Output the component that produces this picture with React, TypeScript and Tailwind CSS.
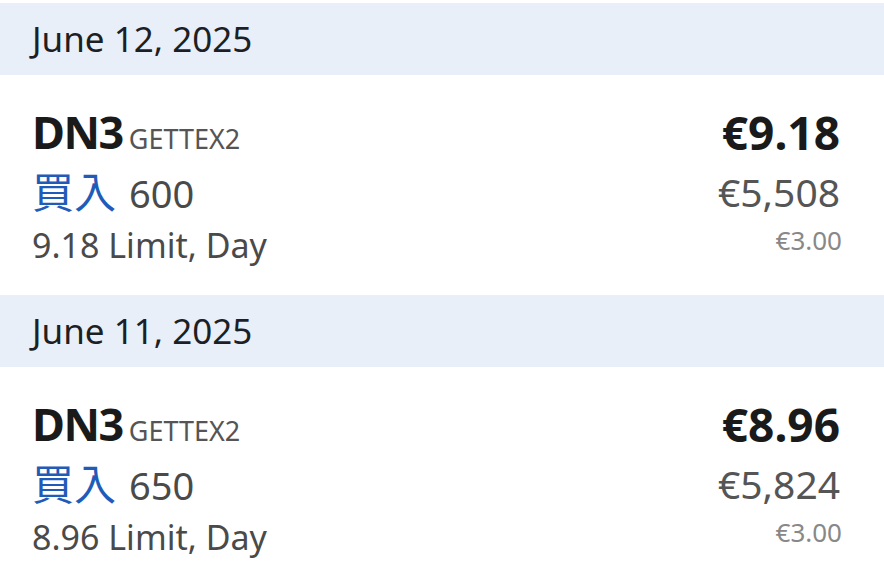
const orders = [
  { date: 'June 12, 2025', symbol: 'DN3', venue: 'GETTEX2', qty: 600, price: '€9.18', total: '€5,508', fee: '€3.00', limit: '9.18 Limit, Day' },
  { date: 'June 11, 2025', symbol: 'DN3', venue: 'GETTEX2', qty: 650, price: '€8.96', total: '€5,824', fee: '€3.00', limit: '8.96 Limit, Day' },
];

export default function App() {
  return (
    <div
      className="w-[884px] h-[586px] bg-white pt-[3px] overflow-hidden"
      style={{ fontFamily: '"Noto Sans", "Noto Sans CJK TC", sans-serif' }}
    >
      {orders.map((o, i) => (
        <div key={i}>
          <div className="h-[72px] bg-[#e9eff9] flex items-center px-[32px] text-[35px] text-[#1c1f26]">
            {o.date}
          </div>
          <div className="h-[220px] px-[32px] pt-[29px] flex justify-between">
            <div className="flex flex-col">
              <div className="h-[56px] leading-[56px] whitespace-nowrap">
                <span className="text-[45px] font-bold text-[#1a1a1a] tracking-[-1.5px]">{o.symbol}</span>
                <span className="ml-[6px] text-[27px] text-[#555]">{o.venue}</span>
              </div>
              <div className="h-[64px] leading-[64px] whitespace-nowrap">
                <span className="text-[42px] text-[#1f5bb8]">買入</span>
                <span className="ml-[13px] text-[38px] text-[#4a4a4a]">{o.qty}</span>
              </div>
              <div className="h-[43px] leading-[43px] text-[34px] text-[#4a4a4a] whitespace-nowrap">{o.limit}</div>
            </div>
            <div className="flex flex-col items-end pr-[12px]">
              <div className="h-[56px] leading-[56px] text-[46px] font-bold text-[#1a1a1a]">{o.price}</div>
              <div className="h-[64px] leading-[64px] text-[39px] text-[#555]">{o.total}</div>
              <div className="h-[33px] leading-[33px] text-[26px] text-[#888] -mr-[2px]">{o.fee}</div>
            </div>
          </div>
        </div>
      ))}
    </div>
  );
}
